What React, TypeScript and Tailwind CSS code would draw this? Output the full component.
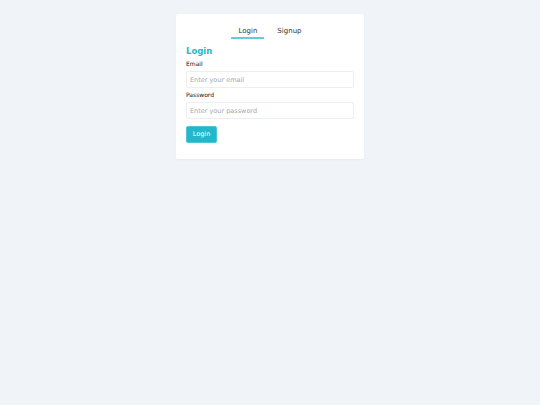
import { useState } from 'react';

function App() {
  const [tab, setTab] = useState<'login' | 'signup'>('login');

  return (
    <div className="min-h-screen bg-[#f0f4f8] pt-[14px] font-['DejaVu_Sans',sans-serif] text-[#222]">
      <div className="mx-auto w-[188px] rounded-[2px] bg-white px-[10px] pb-[16px] pt-[11.5px] shadow-[0_1px_2px_rgba(0,0,0,0.04)]">
        <div className="flex justify-center gap-[6px]">
          <button
            type="button"
            onClick={() => setTab('login')}
            className={`border-b-2 px-[7px] pb-[1px] text-[7px] leading-[10px] text-[#333] ${tab === 'login' ? 'border-[#6cc8d4]' : 'border-transparent'}`}
          >
            Login
          </button>
          <button
            type="button"
            onClick={() => setTab('signup')}
            className={`border-b-2 px-[7px] pb-[1px] text-[7px] leading-[10px] text-[#333] ${tab === 'signup' ? 'border-[#6cc8d4]' : 'border-transparent'}`}
          >
            Signup
          </button>
        </div>

        <h2 className="mt-[6.5px] text-[8.5px] font-bold leading-[12px] text-[#2bb5c9]">Login</h2>

        <form className="mt-[3px]" onSubmit={(event) => event.preventDefault()}>
          <label className="block text-[6px] leading-[8px] font-medium text-[#111]">Email</label>
          <input
            type="email"
            placeholder="Enter your email"
            className="mt-[3px] block h-[17px] w-full rounded-[2px] border border-[#eceef0] px-[3px] text-[6.5px] outline-none placeholder:text-[#a3a8ae]"
          />
          <label className="mt-[3px] block text-[6px] leading-[8px] font-medium text-[#111]">Password</label>
          <input
            type="password"
            placeholder="Enter your password"
            className="mt-[3px] block h-[17px] w-full rounded-[2px] border border-[#eceef0] px-[3px] text-[6.5px] outline-none placeholder:text-[#a3a8ae]"
          />
          <button
            type="submit"
            className="mt-[7px] h-[17px] w-[31px] rounded-[2px] border border-[#4cc6d6] bg-[#22b8cc] text-[6.5px] text-white"
          >
            Login
          </button>
        </form>
      </div>
    </div>
  );
}

export default App;
